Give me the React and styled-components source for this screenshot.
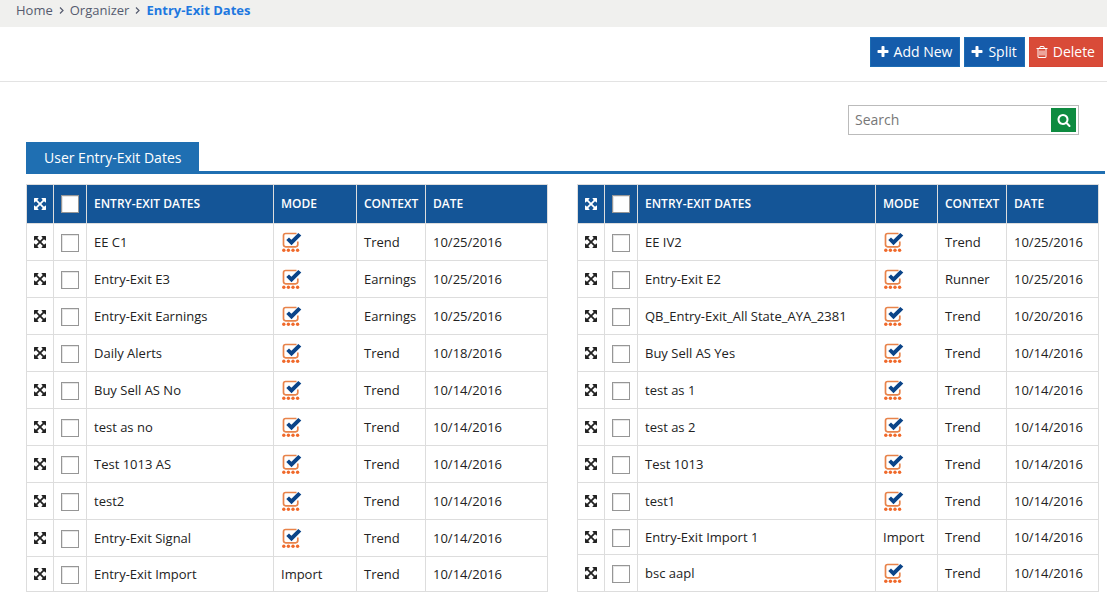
import React from "react";
import styled, { createGlobalStyle } from "styled-components";

const GlobalStyle = createGlobalStyle`
  *, *::before, *::after { box-sizing: border-box; }
  body {
    margin: 0;
    background: #fff;
    color: #222;
    font-family: "Open Sans", "Liberation Sans", sans-serif;
    font-size: 13px;
    line-height: 20px;
  }
  button, input { font-family: inherit; }
`;

const Breadcrumb = styled.nav`
  background: #f0f0ee;
  height: 27px;
  padding: 0 16px;

  ol {
    display: flex;
    gap: 6px;
    margin: 0;
    padding: 0;
    list-style: none;
  }
  li {
    display: flex;
    align-items: center;
    gap: 6px;
  }
`;

const Crumb = styled.a`
  color: ${(p) => (p.$current ? "#1e78e0" : "#555b6e")};
  font-weight: ${(p) => (p.$current ? 700 : 400)};
  text-decoration: none;
`;

const Chevron = styled.svg`
  width: 5px;
  height: 7px;
  fill: none;
  stroke: #555b6e;
  stroke-width: 1.2;
`;

const Toolbar = styled.div`
  display: flex;
  justify-content: flex-end;
  gap: 4px;
  padding: 10px 4px 14px;
  border-bottom: 1px solid #e3e3e3;
`;

const Button = styled.button`
  display: flex;
  align-items: center;
  gap: 4px;
  height: 30px;
  padding: 0 7px 0 5px;
  border: 1px solid ${(p) => (p.$danger ? "#d64635" : "#1c6cb3")};
  background: ${(p) => (p.$danger ? "#d94b38" : "#145cab")};
  color: #fff;
  font-size: 14px;
  line-height: 20px;
  cursor: pointer;
`;

const Glyph = styled.svg`
  display: block;
  flex: none;
  width: ${(p) => p.$size}px;
  height: ${(p) => p.$size}px;
  fill: currentColor;
`;

const Main = styled.main`
  padding: 23px 2px 4px 26px;
`;

const SearchRow = styled.form`
  display: flex;
  justify-content: flex-end;
  padding-right: 26px;
`;

const SearchBox = styled.div`
  display: flex;
  align-items: center;
  width: 231px;
  height: 30px;
  padding-right: 2px;
  border: 1px solid #bbb;
`;

const SearchInput = styled.input`
  flex: 1;
  min-width: 0;
  height: 28px;
  padding: 0 6px 2px;
  border: 0;
  outline: 0;
  background: transparent;
  font-size: 14px;
  color: #333;
  &::placeholder { color: #777; opacity: 1; }
`;

const SearchButton = styled.button`
  display: flex;
  align-items: center;
  justify-content: center;
  width: 25px;
  height: 24px;
  padding: 0;
  border: 0;
  background: #0e8b40;
  color: #fff;
  cursor: pointer;
`;

const Tabs = styled.div`
  display: flex;
  margin-top: 7px;
  border-bottom: 3px solid #1f6fb2;
`;

const Tab = styled.button`
  height: 29px;
  padding: 3px 18px 0;
  border: 0;
  background: #1f6fb2;
  color: #fff;
  font-size: 14px;
  line-height: 20px;
  cursor: pointer;
`;

const Lists = styled.div`
  display: grid;
  grid-template-columns: 1fr 1fr;
  align-items: start;
  gap: 29px;
  padding: 10px 6px 0 0;
`;

const Table = styled.table`
  width: 100%;
  table-layout: fixed;
  border-spacing: 0;
  border-top: 1px solid #ddd;
  border-left: 1px solid #ddd;
`;

const Col = styled.col`
  width: ${(p) => (p.$width ? `${p.$width}px` : "auto")};
`;

const HeadCell = styled.th`
  height: 39px;
  padding: 0 0 0 ${(p) => (p.$icon ? 6 : 7)}px;
  border-right: 1px solid #ddd;
  border-bottom: 1px solid #ddd;
  background: #145597;
  color: #fff;
  font-size: 12px;
  font-weight: 600;
  text-align: left;
  white-space: nowrap;
`;

const Cell = styled.td`
  height: ${(p) => (p.$short ? 35 : 37)}px;
  padding: 0 0 0 ${(p) => (p.$icon ? 6 : 7)}px;
  border-right: 1px solid #ddd;
  border-bottom: 1px solid #ddd;
  white-space: nowrap;
`;

const Tick = styled.input`
  appearance: none;
  display: block;
  width: 18px;
  height: 18px;
  margin: 1px 0 0;
  border: 1px solid #969696;
  background: #fff;
  box-shadow: inset 1px 1px 0 #e6e6e6;
  th & { margin-top: 0; }
  &:checked { background: #145cab; }
`;

const ModeSvg = styled.svg`
  display: block;
  width: 21px;
  height: 20px;
`;

const PATHS = {
  plus: "M1600 736v192q0 40-28 68t-68 28h-416v416q0 40-28 68t-68 28h-192q-40 0-68-28t-28-68v-416h-416q-40 0-68-28t-28-68v-192q0-40 28-68t68-28h416v-416q0-40 28-68t68-28h192q40 0 68 28t28 68v416h416q40 0 68 28t28 68z",
  trash: "M704 736v576q0 14-9 23t-23 9h-64q-14 0-23-9t-9-23v-576q0-14 9-23t23-9h64q14 0 23 9t9 23zm256 0v576q0 14-9 23t-23 9h-64q-14 0-23-9t-9-23v-576q0-14 9-23t23-9h64q14 0 23 9t9 23zm256 0v576q0 14-9 23t-23 9h-64q-14 0-23-9t-9-23v-576q0-14 9-23t23-9h64q14 0 23 9t9 23zm128 724v-948h-896v948q0 22 7 40.500t14.500 27 10.500 8.500h832q3 0 10.500-8.500t14.500-27 7-40.500zm-672-1076h448l-48-117q-7-9-17-11h-317q-10 2-17 11zm928 32v64q0 14-9 23t-23 9h-96v948q0 83-47 143.500t-113 60.500h-832q-66 0-113-58.500t-47-141.500v-952h-96q-14 0-23-9t-9-23v-64q0-14 9-23t23-9h309l70-167q15-37 54-63t79-26h320q40 0 79 26t54 63l70 167h309q14 0 23 9t9 23z",
  search: "M1216 832q0-185-131.500-316.500t-316.500-131.500-316.500 131.500-131.500 316.500 131.500 316.500 316.500 131.500 316.500-131.500 131.500-316.500zm512 832q0 52-38 90t-90 38q-54 0-90-38l-343-342q-179 124-399 124-143 0-273.500-55.500t-225-150-150-225-55.500-273.500 55.500-273.500 150-225 225-150 273.500-55.500 273.500 55.500 225 150 150 225 55.500 273.500q0 220-124 399l343 343q37 37 37 90z",
  move: "M1411 541l-355 355 355 355 144-144q29-31 70-14 39 17 39 59v448q0 26-19 45t-45 19h-448q-42 0-59-40-17-39 14-69l144-144-355-355-355 355 144 144q31 30 14 69-17 40-59 40h-448q-26 0-45-19t-19-45v-448q0-42 40-59 39-17 69 14l144 144 355-355-355-355-144 144q-19 19-45 19-12 0-24-5-40-17-40-59v-448q0-26 19-45t45-19h448q42 0 59 40 17 39-14 69l-144 144 355 355 355-355-144-144q-31-30-14-69 17-40 59-40h448q26 0 45 19t19 45v448q0 42-39 59-13 5-25 5-26 0-45-19z",
};

function Icon({ name, size = 14 }) {
  return (
    <Glyph viewBox="0 0 1792 1792" $size={size} aria-hidden="true">
      <path d={PATHS[name]} />
    </Glyph>
  );
}

function ModeIcon() {
  return (
    <ModeSvg viewBox="0 0 21 20" role="img" aria-label="Selection">
      <path
        d="M15.500 1.500H4.700Q2.500 1.500 2.500 3.700V12.600Q2.500 14.800 4.700 14.800H14.600Q16.800 14.800 16.800 12.600V9.500"
        fill="none"
        stroke="#e8834a"
        strokeWidth="1.700"
      />
      <path d="M5.300 8L8 5.500L10.400 7.800L17.300 0.900L20.300 3.600L10.500 13.200Z" fill="#0b4488" />
      <g fill="#f0692a">
        <circle cx="2.800" cy="18.300" r="1.700" />
        <circle cx="7.400" cy="18.300" r="1.700" />
        <circle cx="12" cy="18.300" r="1.700" />
        <circle cx="16.600" cy="18.300" r="1.700" />
      </g>
    </ModeSvg>
  );
}

const S = "select";
const LEFT = [
  ["EE C1", S, "Trend", "10/25/2016"],
  ["Entry-Exit E3", S, "Earnings", "10/25/2016"],
  ["Entry-Exit Earnings", S, "Earnings", "10/25/2016"],
  ["Daily Alerts", S, "Trend", "10/18/2016"],
  ["Buy Sell AS No", S, "Trend", "10/14/2016"],
  ["test as no", S, "Trend", "10/14/2016"],
  ["Test 1013 AS", S, "Trend", "10/14/2016"],
  ["test2", S, "Trend", "10/14/2016"],
  ["Entry-Exit Signal", S, "Trend", "10/14/2016"],
  ["Entry-Exit Import", "Import", "Trend", "10/14/2016"],
];
const RIGHT = [
  ["EE IV2", S, "Trend", "10/25/2016"],
  ["Entry-Exit E2", S, "Runner", "10/25/2016"],
  ["QB_Entry-Exit_All State_AYA_2381", S, "Trend", "10/20/2016"],
  ["Buy Sell AS Yes", S, "Trend", "10/14/2016"],
  ["test as 1", S, "Trend", "10/14/2016"],
  ["test as 2", S, "Trend", "10/14/2016"],
  ["Test 1013", S, "Trend", "10/14/2016"],
  ["test1", S, "Trend", "10/14/2016"],
  ["Entry-Exit Import 1", "Import", "Trend", "10/14/2016"],
  ["bsc aapl", S, "Trend", "10/14/2016"],
];

function DateTable({ rows, widths }) {
  return (
    <Table>
      <colgroup>
        {widths.map((w, i) => (
          <Col key={i} $width={w} />
        ))}
      </colgroup>
      <thead>
        <tr>
          <HeadCell $icon><Icon name="move" /></HeadCell>
          <HeadCell><Tick type="checkbox" aria-label="Select all" /></HeadCell>
          <HeadCell>ENTRY-EXIT DATES</HeadCell>
          <HeadCell>MODE</HeadCell>
          <HeadCell>CONTEXT</HeadCell>
          <HeadCell>DATE</HeadCell>
        </tr>
      </thead>
      <tbody>
        {rows.map(([name, mode, context, date]) => {
          const short = mode !== S;
          return (
            <tr key={name}>
              <Cell $icon $short={short}><Icon name="move" /></Cell>
              <Cell $short={short}><Tick type="checkbox" aria-label={name} /></Cell>
              <Cell $short={short}>{name}</Cell>
              <Cell $short={short}>{short ? mode : <ModeIcon />}</Cell>
              <Cell $short={short}>{context}</Cell>
              <Cell $short={short}>{date}</Cell>
            </tr>
          );
        })}
      </tbody>
    </Table>
  );
}

function Separator() {
  return (
    <Chevron viewBox="0 0 5 7" aria-hidden="true">
      <path d="M1 0.500L4 3.500L1 6.500" />
    </Chevron>
  );
}

export default function App() {
  return (
    <>
      <GlobalStyle />
      <Breadcrumb aria-label="Breadcrumb">
        <ol>
          <li><Crumb href="#home">Home</Crumb><Separator /></li>
          <li><Crumb href="#organizer">Organizer</Crumb><Separator /></li>
          <li><Crumb href="#dates" $current aria-current="page">Entry-Exit Dates</Crumb></li>
        </ol>
      </Breadcrumb>
      <Toolbar>
        <Button type="button"><Icon name="plus" />Add New</Button>
        <Button type="button"><Icon name="plus" />Split</Button>
        <Button type="button" $danger><Icon name="trash" />Delete</Button>
      </Toolbar>
      <Main>
        <SearchRow role="search" onSubmit={(e) => e.preventDefault()}>
          <SearchBox>
            <SearchInput type="text" placeholder="Search" aria-label="Search" />
            <SearchButton type="submit" aria-label="Search"><Icon name="search" /></SearchButton>
          </SearchBox>
        </SearchRow>
        <Tabs role="tablist">
          <Tab type="button" role="tab" aria-selected="true">User Entry-Exit Dates</Tab>
        </Tabs>
        <Lists>
          <DateTable rows={LEFT} widths={[27, 33, null, 83, 69, 122]} />
          <DateTable rows={RIGHT} widths={[27, 33, null, 62, 69, 92]} />
        </Lists>
      </Main>
    </>
  );
}
